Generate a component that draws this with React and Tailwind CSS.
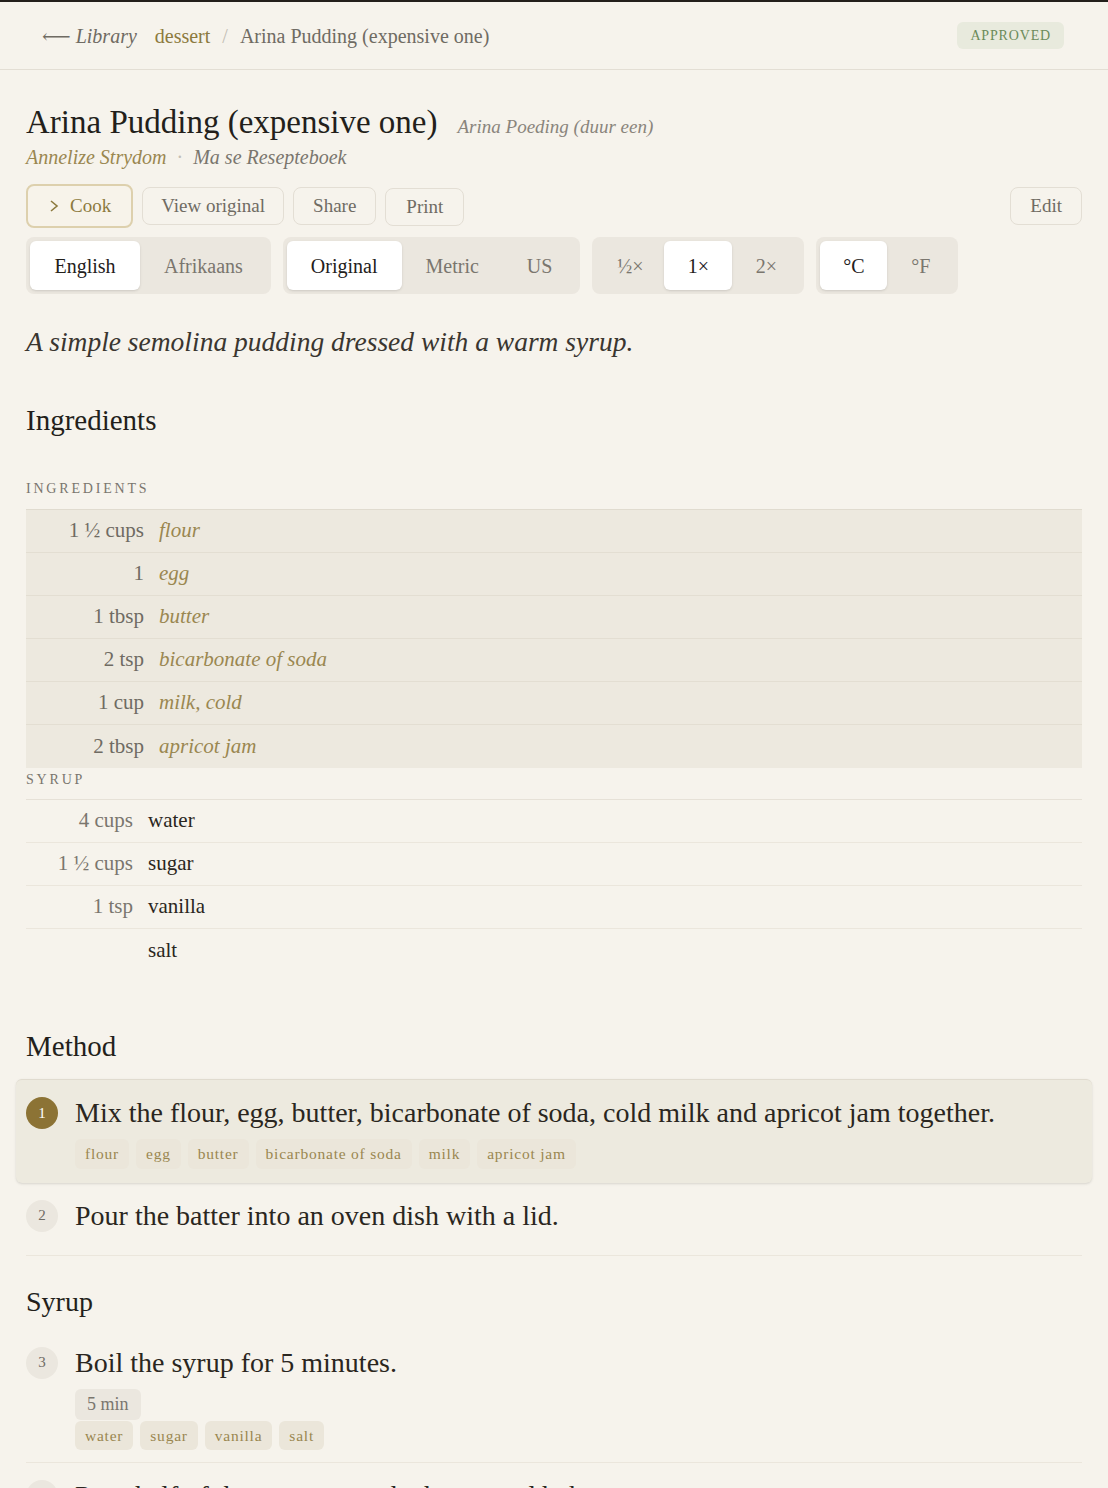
import { useState } from 'react';

const serif = { fontFamily: '"Liberation Serif", "DejaVu Serif", serif' };

const group1 = [
  { qty: '1 ½ cups', name: 'flour' },
  { qty: '1', name: 'egg' },
  { qty: '1 tbsp', name: 'butter' },
  { qty: '2 tsp', name: 'bicarbonate of soda' },
  { qty: '1 cup', name: 'milk, cold' },
  { qty: '2 tbsp', name: 'apricot jam' },
];

const syrup = [
  { qty: '4 cups', name: 'water' },
  { qty: '1 ½ cups', name: 'sugar' },
  { qty: '1 tsp', name: 'vanilla' },
  { qty: '', name: 'salt' },
];

function Segmented({ items, active, itemClass }) {
  return (
    <div className="flex items-center rounded-lg bg-[#ebe7df] p-1">
      {items.map((it) => (
        <div
          key={it}
          className={`flex h-[49px] items-center justify-center rounded-md text-[20px] ${itemClass} ${
            it === active ? 'bg-white text-[#23201b] shadow-sm' : 'text-[#7a766e]'
          }`}
        >
          {it}
        </div>
      ))}
    </div>
  );
}

function Tag({ children }) {
  return (
    <span className="rounded-md bg-[#ebe6da] px-[10px] py-[3px] text-[15.5px] tracking-[0.05em] text-[#9a8750]">
      {children}
    </span>
  );
}

export default function App() {
  const [lang, setLang] = useState('English');

  return (
    <div style={serif} className="min-h-screen border-t-2 border-[#231f1b] bg-[#f6f3ec] text-[#2a2620]">
      {/* Header */}
      <header className="flex h-[68px] items-center justify-between border-b border-[#e3ded4] pl-[42px] pr-[44px]">
        <div className="flex items-center text-[20px]">
          <span className="italic text-[#6f6b63]">
            <span className="not-italic">⟵</span> Library
          </span>
          <span className="ml-[18px] text-[#8c7a3e]">dessert</span>
          <span className="mx-[12px] text-[#c3beb4]">/</span>
          <span className="text-[#6f6b63]">Arina Pudding (expensive one)</span>
        </div>
        <span className="rounded-md bg-[#e8eadd] px-[13px] py-[3px] text-[14px] tracking-[0.06em] text-[#6b8a5a]">
          APPROVED
        </span>
      </header>

      <main className="px-[26px]">
        {/* Title */}
        <div className="mt-[32px] flex items-baseline gap-[20px]">
          <h1 className="text-[33px] leading-[40px] text-[#231f1b]">Arina Pudding (expensive one)</h1>
          <span className="text-[19px] italic text-[#8a857c]">Arina Poeding (duur een)</span>
        </div>
        <div className="flex items-center text-[20px] italic">
          <span className="text-[#9a8750]">Annelize Strydom</span>
          <span className="mx-[10px] not-italic text-[#c3beb4]">·</span>
          <span className="text-[#7a766e]">Ma se Resepteboek</span>
        </div>

        {/* Actions */}
        <div className="mt-[12px] flex items-center">
          <button className="flex h-[44px] items-center gap-[10px] rounded-lg border-2 border-[#ddd0ad] bg-[#f7f3ea] px-[20px] text-[19px] text-[#8c7a3e]">
            <svg width="12" height="14" viewBox="0 0 12 14" fill="none" stroke="currentColor" strokeWidth="1.6">
              <path d="M3 2l6 5-6 5" />
            </svg>
            Cook
          </button>
          <button className="ml-[9px] h-[38px] rounded-lg border border-[#e3ded4] px-[18px] text-[19px] text-[#6f6b63]">
            View original
          </button>
          <button className="ml-[9px] h-[38px] rounded-lg border border-[#e3ded4] px-[19px] text-[19px] text-[#6f6b63]">
            Share
          </button>
          <button className="ml-[9px] mt-[2px] h-[38px] rounded-lg border border-[#e3ded4] px-[20px] text-[19px] text-[#6f6b63]">
            Print
          </button>
          <button className="ml-auto h-[38px] rounded-lg border border-[#e3ded4] px-[19px] text-[19px] text-[#6f6b63]">
            Edit
          </button>
        </div>

        {/* Toggles */}
        <div className="mt-[9px] flex items-center gap-[12px]">
          <div onClick={() => setLang(lang === 'English' ? 'Afrikaans' : 'English')}>
            <Segmented items={['English', 'Afrikaans']} active={lang} itemClass="px-[24px] min-w-[110px]" />
          </div>
          <Segmented items={['Original', 'Metric', 'US']} active="Original" itemClass="px-[24px]" />
          <Segmented items={['½×', '1×', '2×']} active="1×" itemClass="w-[68px] text-[18px]" />
          <Segmented items={['°C', '°F']} active="°C" itemClass="w-[67px]" />
        </div>

        <p className="mt-[27px] text-[27.5px] italic text-[#3a3630]">
          A simple semolina pudding dressed with a warm syrup.
        </p>

        {/* Ingredients */}
        <h2 className="mt-[37px] text-[29px] text-[#231f1b]">Ingredients</h2>

        <div className="mt-[35px] text-[14px] tracking-[0.2em] text-[#7a766e]">INGREDIENTS</div>
        <div className="mt-[10px] border-t border-[#e0dbcf] bg-[#ede9df]">
          {group1.map((r) => (
            <div key={r.name} className="flex h-[43px] items-center border-b border-[#e3ded2] last:border-b-0 text-[21px]">
              <span className="w-[118px] text-right text-[#6f6b63]">{r.qty}</span>
              <span className="ml-[15px] italic text-[#9a8750]">{r.name}</span>
            </div>
          ))}
        </div>

        <div className="mt-[1px] text-[14px] tracking-[0.2em] text-[#7a766e]">SYRUP</div>
        <div className="mt-[9px] border-t border-[#e6e1d7]">
          {syrup.map((r) => (
            <div key={r.name} className="flex h-[43px] items-center border-b border-[#ebe6dc] last:border-b-0 text-[21px]">
              <span className="w-[107px] text-right text-[#7a766e]">{r.qty}</span>
              <span className="ml-[15px] text-[#2a2620]">{r.name}</span>
            </div>
          ))}
        </div>

        {/* Method */}
        <h2 className="mt-[53px] text-[29px] text-[#231f1b]">Method</h2>

        <div className="-mx-[10px] mt-[11px] rounded-md border-t border-[#e0dbcf] bg-[#edeadf] px-[10px] pb-[14px] pt-[16px] shadow-sm">
          <div className="flex items-start gap-[17px]">
            <div className="mt-[1px] flex h-[32px] w-[32px] shrink-0 items-center justify-center rounded-full bg-[#8c7335] text-[15px] text-white">
              1
            </div>
            <div>
              <p className="text-[28px] leading-[34px] text-[#2a2620]">
                Mix the flour, egg, butter, bicarbonate of soda, cold milk and apricot jam together.
              </p>
              <div className="mt-[9px] flex gap-[7px]">
                {['flour', 'egg', 'butter', 'bicarbonate of soda', 'milk', 'apricot jam'].map((t) => (
                  <Tag key={t}>{t}</Tag>
                ))}
              </div>
            </div>
          </div>
        </div>

        <div className="flex items-start gap-[17px] border-b border-[#ebe6dc] pb-[22px] pt-[16px]">
          <div className="mt-[1px] flex h-[32px] w-[32px] shrink-0 items-center justify-center rounded-full bg-[#ebe7df] text-[15px] text-[#6f6b63]">
            2
          </div>
          <p className="text-[28px] leading-[34px] text-[#2a2620]">Pour the batter into an oven dish with a lid.</p>
        </div>

        <h3 className="mt-[25px] text-[28px] text-[#231f1b]">Syrup</h3>

        <div className="mt-[23px] flex items-start gap-[17px] border-b border-[#ebe6dc] pb-[12px]">
          <div className="mt-[1px] flex h-[32px] w-[32px] shrink-0 items-center justify-center rounded-full bg-[#ebe7df] text-[15px] text-[#6f6b63]">
            3
          </div>
          <div>
            <p className="text-[28px] leading-[34px] text-[#2a2620]">Boil the syrup for 5 minutes.</p>
            <div className="mt-[9px] flex">
              <span className="rounded-md bg-[#ebe7df] px-[12px] py-[2px] text-[18px] text-[#7a766e]">5 min</span>
            </div>
            <div className="mt-[1px] flex gap-[7px]">
              {['water', 'sugar', 'vanilla', 'salt'].map((t) => (
                <Tag key={t}>{t}</Tag>
              ))}
            </div>
          </div>
        </div>

        <div className="flex items-start gap-[17px] pb-[22px] pt-[16px]">
          <div className="mt-[1px] flex h-[32px] w-[32px] shrink-0 items-center justify-center rounded-full bg-[#ebe7df] text-[15px] text-[#6f6b63]">
            4
          </div>
          <p className="text-[28px] leading-[34px] text-[#2a2620]">Pour half of the syrup over the batter and bake.</p>
        </div>
      </main>
    </div>
  );
}
